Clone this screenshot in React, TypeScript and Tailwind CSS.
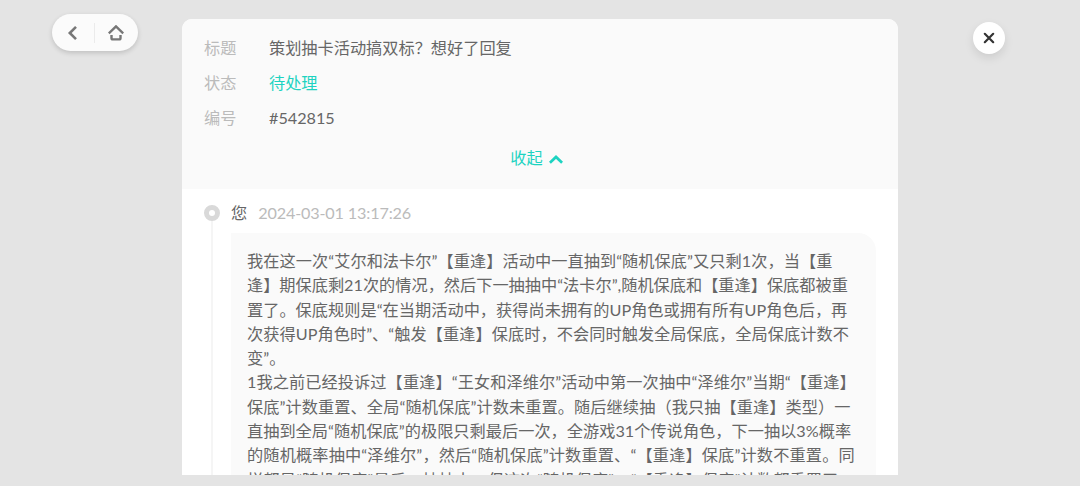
const info = [
  { label: "标题", value: "策划抽卡活动搞双标？想好了回复", color: "text-[#666]" },
  { label: "状态", value: "待处理", color: "text-[#1dd3c1]" },
  { label: "编号", value: "#542815", color: "text-[#666]" },
];

const lines = [
  { text: "我在这一次“艾尔和法卡尔”【重逢】活动中一直抽到“随机保底”又只剩1次，当【重", tracking: "tracking-[0.05px]" },
  { text: "逢】期保底剩21次的情况，然后下一抽抽中“法卡尔”,随机保底和【重逢】保底都被重", tracking: "tracking-[0px]" },
  { text: "置了。保底规则是“在当期活动中，获得尚未拥有的UP角色或拥有所有UP角色后，再", tracking: "tracking-[0.02px]" },
  { text: "次获得UP角色时”、“触发【重逢】保底时，不会同时触发全局保底，全局保底计数不", tracking: "tracking-[0.05px]" },
  { text: "变”。", tracking: "tracking-[0.05px]" },
  { text: "1我之前已经投诉过【重逢】“王女和泽维尔”活动中第一次抽中“泽维尔”当期“【重逢】", tracking: "tracking-[0.08px]" },
  { text: "保底”计数重置、全局“随机保底”计数未重置。随后继续抽（我只抽【重逢】类型）一", tracking: "tracking-[0.08px]" },
  { text: "直抽到全局“随机保底”的极限只剩最后一次，全游戏31个传说角色，下一抽以3%概率", tracking: "tracking-[0.02px]" },
  { text: "的随机概率抽中“泽维尔”，然后“随机保底”计数重置、“【重逢】保底”计数不重置。同", tracking: "tracking-[0.14px]" },
  { text: "样都是“随机保底”最后一抽抽中，但这次“随机保底”、“【重逢】保底”计数都重置了", tracking: "tracking-[0.14px]" },
];

function NavPill() {
  return (
    <div className="flex items-center w-[86px] h-[37px] ml-[52px] mt-[14px] rounded-full bg-[#fbfbfb] shadow-[0_2px_5px_rgba(0,0,0,0.16)]">
      <button className="flex justify-center w-[42px]">
        <svg width="16" height="16" viewBox="0 0 16 16" fill="none" stroke="#777" strokeWidth="2.6">
          <path d="M11 1.8 4.8 8l6.2 6.2" />
        </svg>
      </button>
      <div className="w-px h-5 bg-[#ebebeb]" />
      <button className="flex justify-center w-[42px]">
        <svg width="16" height="16" viewBox="0 0 16 16" fill="none" stroke="#777" strokeWidth="2.4">
          <path d="M.8 8.4 8 1.4l7.2 7" />
          <path d="M3.5 10v3q0 1.4 1.4 1.4h6.2q1.4 0 1.4-1.4v-3" />
        </svg>
      </button>
    </div>
  );
}

function TicketInfo() {
  return (
    <div className="h-[170px] pt-3 bg-[#fafafa]">
      {info.map((row) => (
        <div key={row.label} className="flex h-[35px] items-center pl-[22px]">
          <span className="w-[65px] text-[#bbb]">{row.label}</span>
          <span className={row.color}>{row.value}</span>
        </div>
      ))}
      <button className="flex items-center justify-center w-full h-[45px] pr-[7px] gap-[6px] text-[#1dd3c1]">
        收起
        <svg className="mt-px" width="14" height="9" viewBox="0 0 14 9" fill="none" stroke="#1dd3c1" strokeWidth="2.8">
          <path d="M.9 7.8 7 2l6.1 5.8" />
        </svg>
      </button>
    </div>
  );
}

function Message() {
  return (
    <div className="flex pl-[22px] pt-4">
      <div className="flex flex-col items-center w-4 h-[600px] mr-[11px]">
        <div className="w-4 h-4 shrink-0 rounded-full border-[5px] border-[#d9d9d9] bg-white" />
        <div className="w-[2px] grow bg-[#f5f5f5]" />
      </div>
      <div className="w-[645px]">
        <div className="flex items-center h-4 gap-[11px]">
          <span className="text-[#666]">您</span>
          <span className="text-[#bbb] tracking-[-0.15px]">2024-03-01 13:17:26</span>
        </div>
        <div className="mt-3 h-[300px] pl-4 pt-4 rounded-tr-[18px] bg-[#fafafa] text-[#666] leading-[24.3px] whitespace-nowrap">
          {lines.map((line) => (
            <p key={line.text} className={line.tracking}>
              {line.text}
            </p>
          ))}
        </div>
      </div>
    </div>
  );
}

export default function App() {
  return (
    <div className="flex w-[1080px] h-[486px] overflow-hidden bg-[#e4e4e4] text-[16.2px] font-['Lato','Noto_Sans_CJK_SC',sans-serif] [text-spacing-trim:space-all] [font-kerning:none]">
      <div className="w-[182px] shrink-0">
        <NavPill />
      </div>
      <div className="w-[716px] h-[456px] mt-[19px] shrink-0 overflow-hidden rounded-t-[10px] bg-white">
        <TicketInfo />
        <Message />
      </div>
      <button className="flex items-center justify-center size-8 ml-[75px] mt-[22px] rounded-full bg-white shadow-[0_4px_10px_rgba(0,0,0,0.1)]">
        <svg width="12" height="12" viewBox="0 0 12 12" fill="none" stroke="#333" strokeWidth="2.2" strokeLinecap="round">
          <path d="m1.8 1.8 8.4 8.4M10.2 1.8l-8.4 8.4" />
        </svg>
      </button>
    </div>
  );
}
